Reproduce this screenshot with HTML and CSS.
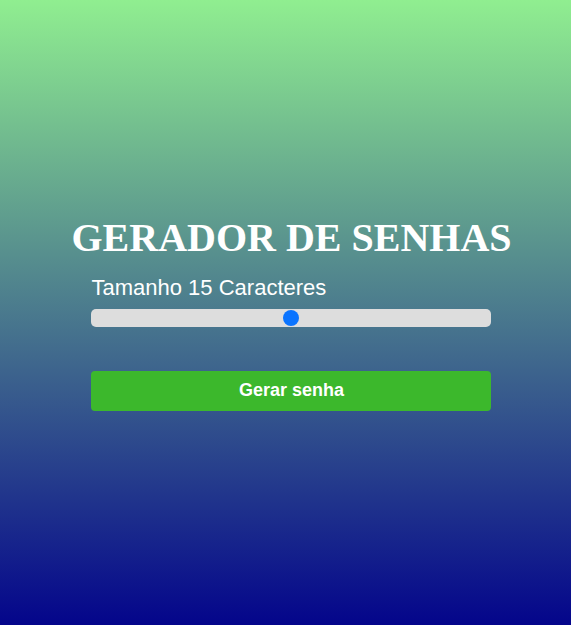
FILE: index.html
```html
<!DOCTYPE html>
<html lang="pt">
<head>
<meta charset="utf-8">
<link rel="stylesheet" href="styles.css">
</head>
<body>
<main class="app">
  <h1 class="title">GERADOR DE SENHAS</h1>
  <div class="panel">
    <label class="size-label">Tamanho <span>15</span> Caracteres</label>
    <input class="slider" type="range" min="5" max="25" value="15">
    <button class="btn">Gerar senha</button>
  </div>
</main>
</body>
</html>
```
FILE: styles.css
```css
html, body { margin: 0; padding: 0; height: 100%; }
body {
  background: linear-gradient(to bottom, #90ee90, #04058b);
  min-height: 100vh;
  display: flex;
  align-items: center;
  justify-content: center;
  padding-left: 12px;
  box-sizing: border-box;
  font-family: "Liberation Sans", Arial, sans-serif;
}
.app {
  display: flex;
  flex-direction: column;
  align-items: center;
}
.title {
  font-family: "Liberation Serif", "Times New Roman", serif;
  font-size: 40px;
  font-weight: bold;
  color: #fff;
  margin: 0 0 14px;
  line-height: 46px;
}
.panel {
  width: 400px;
  display: flex;
  flex-direction: column;
}
.size-label {
  color: #fff;
  font-size: 22px;
  line-height: 26px;
  margin-bottom: 8px;
}
.slider {
  -webkit-appearance: none;
  appearance: none;
  width: 100%;
  height: 18px;
  margin: 0;
  background: #dddddd;
  border-radius: 5px;
  outline: none;
}
.slider::-webkit-slider-thumb {
  -webkit-appearance: none;
  appearance: none;
  width: 16px;
  height: 16px;
  border-radius: 50%;
  background: #0a74ff;
  border: none;
}
.btn {
  margin-top: 44px;
  height: 40px;
  border: none;
  border-radius: 4px;
  background: #3cb82c;
  color: #fff;
  font-family: "Liberation Sans", Arial, sans-serif;
  font-size: 18px;
  font-weight: bold;
}
```
